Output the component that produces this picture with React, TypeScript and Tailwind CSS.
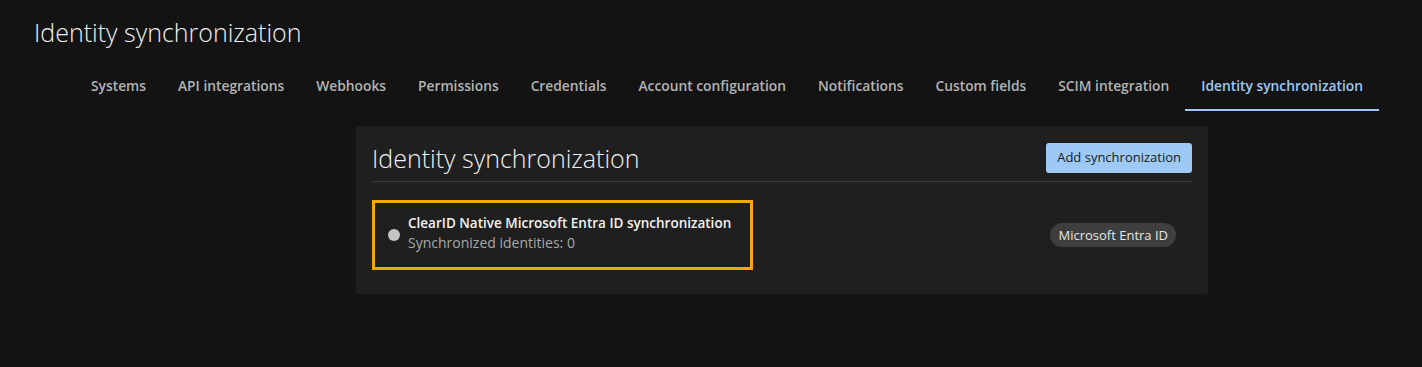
import React from 'react';

const tabs = [
  'Systems',
  'API integrations',
  'Webhooks',
  'Permissions',
  'Credentials',
  'Account configuration',
  'Notifications',
  'Custom fields',
  'SCIM integration',
  'Identity synchronization',
];

export default function App() {
  const active = 'Identity synchronization';
  return (
    <div className="min-h-[367px] w-full bg-[#131313] font-['Open_Sans','Noto_Sans',sans-serif] text-white">
      {/* Header */}
      <div className="px-[34px] pt-[15px]">
        <h1 className="text-[25px] font-light leading-[34px] text-[#f0f0f0]">Identity synchronization</h1>
      </div>

      {/* Tabs */}
      <nav className="mt-[24px] flex pl-[75px]">
        {tabs.map((t) => (
          <div
            key={t}
            className={
              t === active
                ? 'border-b-2 border-[#9ec9f5] px-4 pb-[12px] pt-[3px] text-[13.8px] font-semibold text-[#9ec9f5]'
                : 'border-b-2 border-transparent px-4 pb-[12px] pt-[3px] text-[13.8px] font-semibold text-[#b4b4b4]'
            }
          >
            {t}
          </div>
        ))}
      </nav>

      {/* Card */}
      <div className="ml-[356px] mt-[15px] w-[852px] rounded-[3px] bg-[#1f1f1f] px-4 pb-[24px] pt-4">
        <div className="flex items-center justify-between border-b border-[#3a3a3a] pb-[7px]">
          <h2 className="text-[25px] font-light leading-[32px] text-[#f0f0f0]">Identity synchronization</h2>
          <button className="h-[30px] rounded-[3px] bg-[#9ec9f5] px-[11px] text-[13px] text-[#1a1a1a]">
            Add synchronization
          </button>
        </div>

        <div className="mt-[18px] flex items-center justify-between pr-4">
          <div className="flex h-[70px] w-[381px] items-center gap-[8px] border-[3px] border-[#f5a800] pl-[13px]">
            <span className="h-[12px] w-[12px] rounded-full bg-[#c4c4c4]" />
            <div className="-mt-[3px] leading-[20px]">
              <div className="text-[13.5px] font-semibold text-[#f2f2f2]">
                ClearID Native Microsoft Entra ID synchronization
              </div>
              <div className="text-[14px] text-[#a8a8a8]">Synchronized identities: 0</div>
            </div>
          </div>
          <span className="rounded-full bg-[#3e3e3e] px-[8px] py-[2px] text-[13px] leading-[20px] text-[#e6e6e6]">
            Microsoft Entra ID
          </span>
        </div>
      </div>
    </div>
  );
}
